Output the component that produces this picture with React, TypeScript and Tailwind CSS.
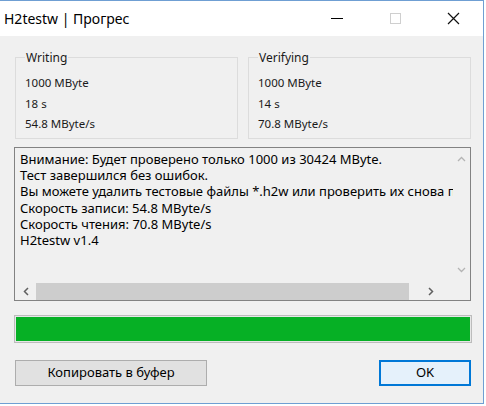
import React from "react";

const lines = [
  "Внимание: Будет проверено только 1000 из 30424 MByte.",
  "Тест завершился без ошибок.",
  "Вы можете удалить тестовые файлы *.h2w или проверить их снова позже.",
  "Скорость записи: 54.8 MByte/s",
  "Скорость чтения: 70.8 MByte/s",
  "H2testw v1.4",
];

function GroupBox({ title, values }: { title: string; values: string[] }) {
  return (
    <div className="relative w-[223px] h-[82px] border border-[#dcdcdc]">
      <span className="absolute left-[9px] -top-[8px] bg-[#f0f0f0] px-[1px] leading-[16px] text-[#1a1a1a]">
        {title}
      </span>
      <div className="flex flex-col pt-[17px] pl-[9px] gap-[4px] leading-[16.5px] text-[11.5px] text-[#1a1a1a]">
        {values.map((v) => (
          <span key={v}>{v}</span>
        ))}
      </div>
    </div>
  );
}

export default function App() {
  return (
    <div
      className="w-[486px] h-[406px] bg-white text-[12px]"
      style={{ fontFamily: '"Noto Sans", "DejaVu Sans", sans-serif' }}
    >
      <div className="w-[484px] h-[404px] flex flex-col border-t border-r border-b border-[#6f9fd3]">
        {/* title bar */}
        <div className="h-[35px] flex items-center bg-white">
          <span className="pl-[4px] text-[14px] text-black flex-1">
            H2testw | Прогрес
          </span>
          <div className="flex items-center h-full mr-[1px]">
            <div className="w-[58px] h-full flex items-center justify-center">
              <div className="w-[12px] h-[1px] bg-black" />
            </div>
            <div className="w-[58px] h-full flex items-center justify-center">
              <div className="w-[11px] h-[11px] border border-[#cfcfcf]" />
            </div>
            <div className="w-[58px] h-full flex items-center justify-center">
              <svg width="13" height="13" viewBox="0 0 13 13">
                <path d="M1 1L12 12M12 1L1 12" stroke="#111" strokeWidth="1.2" />
              </svg>
            </div>
          </div>
        </div>

        {/* client */}
        <div className="flex-1 bg-[#f0f0f0] flex flex-col pl-[14px] pt-[21px]">
          <div className="flex gap-[10px] pl-[1px]">
            <GroupBox title="Writing" values={["1000 MByte", "18 s", "54.8 MByte/s"]} />
            <GroupBox title="Verifying" values={["1000 MByte", "14 s", "70.8 MByte/s"]} />
          </div>

          {/* log box */}
          <div className="mt-[8px] w-[457px] h-[154px] border border-[#828282] flex flex-col">
            <div className="flex flex-1 min-h-0">
              <div className="flex-1 overflow-hidden pl-[5px] pt-[3px] text-[13px] leading-[16.2px] text-black whitespace-nowrap">
                {lines.map((l) => (
                  <div key={l}>{l}</div>
                ))}
              </div>
              <div className="w-[17px] flex flex-col items-center justify-between pt-[8px] pb-[10px]">
                <svg width="9" height="6" viewBox="0 0 9 6">
                  <path d="M1 5L4.5 1.5L8 5" fill="none" stroke="#b4b4b4" strokeWidth="1.3" />
                </svg>
                <svg width="9" height="6" viewBox="0 0 9 6">
                  <path d="M1 1L4.5 4.5L8 1" fill="none" stroke="#b4b4b4" strokeWidth="1.3" />
                </svg>
              </div>
            </div>
            <div className="h-[17px] flex items-center">
              <div className="w-[21px] flex items-center justify-center">
                <svg width="6" height="9" viewBox="0 0 6 9">
                  <path d="M5 1L1.5 4.5L5 8" fill="none" stroke="#606060" strokeWidth="1.5" />
                </svg>
              </div>
              <div className="w-[373px] h-[17px] bg-[#cdcdcd]" />
              <div className="w-[44px] flex items-center justify-center">
                <svg width="6" height="9" viewBox="0 0 6 9">
                  <path d="M1 1L4.5 4.5L1 8" fill="none" stroke="#606060" strokeWidth="1.5" />
                </svg>
              </div>
              <div className="flex-1 h-full bg-[#f0f0f0]" />
            </div>
          </div>

          {/* progress */}
          <div className="mt-[14px] w-[458px] h-[28px] border border-[#bcbcbc] bg-[#e6e6e6] p-[1px]">
            <div className="w-full h-full bg-[#06b025]" />
          </div>

          {/* buttons */}
          <div className="mt-[17px] flex justify-between w-[457px] pl-[1px]">
            <button className="w-[192px] h-[26px] border border-[#adadad] bg-[#e1e1e1] text-[13px] text-black">
              Копировать в буфер
            </button>
            <button className="w-[92px] h-[26px] border-2 border-[#0078d7] bg-[#e5f1fb] text-[13px] text-black">
              OK
            </button>
          </div>
        </div>
      </div>
    </div>
  );
}
